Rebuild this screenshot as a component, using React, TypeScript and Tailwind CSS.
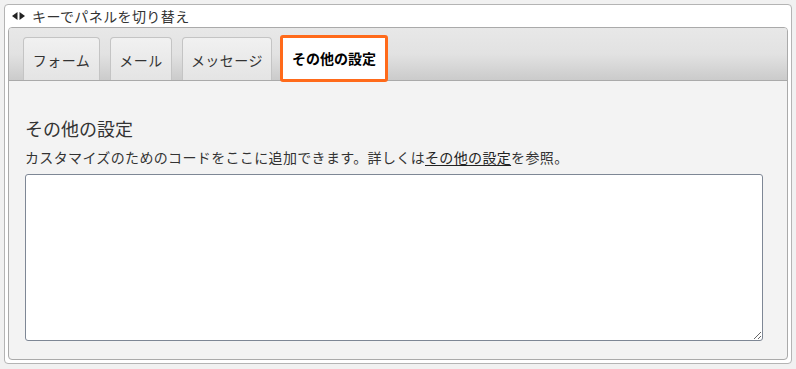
import React, { useState } from 'react';

const FONT = { fontFamily: '"Noto Sans CJK JP", "Noto Sans", sans-serif' };

const TABS = [
  { label: 'フォーム', w: 'w-[77px]' },
  { label: 'メール', w: 'w-[62px]' },
  { label: 'メッセージ', w: 'w-[90px]' },
  { label: 'その他の設定', w: 'w-[108px]' },
];

function App() {
  const [active, setActive] = useState(3);

  return (
    <div className="w-[796px] h-[369px] bg-[#f1f1f1] p-1 text-[#333]" style={FONT}>
      <div className="h-[360px] border border-[#b4b4b4] rounded-[4px] bg-white flex flex-col px-[3px] pb-[3px]">
        {/* header */}
        <div className="h-[22px] flex items-center gap-[7px] pl-[4px] text-[14px] leading-none tracking-[0.4px]">
          <span className="flex items-center">
            <svg width="13" height="8" viewBox="0 0 13 8">
              <path d="M0 4 L5.5 0 L5.5 8 Z" fill="#222" />
              <path d="M13 4 L7.5 0 L7.5 8 Z" fill="#222" />
            </svg>
          </span>
          <span>キーでパネルを切り替え</span>
        </div>

        {/* panel */}
        <div className="flex-1 border border-[#aaa] rounded-[4px] bg-[#f3f3f3] flex flex-col overflow-hidden">
          <div className="h-[53px] flex items-end px-[14px] bg-gradient-to-b from-[#e8e8e8] via-[#e2e2e2] to-[#cbcbcb] border-b border-[#aaa]">
            {TABS.map((t, i) =>
              i === active ? (
                <button
                  key={t.label}
                  onClick={() => setActive(i)}
                  className={`${t.w} ml-[8px] h-[47px] -mb-[2px] bg-white border-[3px] border-[#ff6a1a] rounded-[3px] text-[14px] font-bold text-black`}
                >
                  {t.label}
                </button>
              ) : (
                <button
                  key={t.label}
                  onClick={() => setActive(i)}
                  className={`${t.w} ${i > 0 ? 'ml-[10px]' : ''} h-[43px] pt-[2px] bg-gradient-to-b from-[#f1f1f1] to-[#e4e4e4] border border-b-0 border-[#c4c4c4] rounded-t-[4px] text-[14px] tracking-[0.5px] text-[#333]`}
                >
                  {t.label}
                </button>
              )
            )}
          </div>

          <div className="flex-1 px-[16px] pt-[36px]">
            <h2 className="text-[18px] leading-[22px] text-[#333]">その他の設定</h2>
            <p className="mt-[8px] text-[14px] leading-[20px] tracking-[0.35px]">
              カスタマイズのためのコードをここに追加できます。詳しくは
              <span className="underline underline-offset-2 text-[#222]">その他の設定</span>
              を参照。
            </p>
            <textarea className="mt-[7px] block w-[738px] h-[167px] bg-white border border-[#7e8795] rounded-[3px] resize-y" />
          </div>
        </div>
      </div>
    </div>
  );
}

export default App;
